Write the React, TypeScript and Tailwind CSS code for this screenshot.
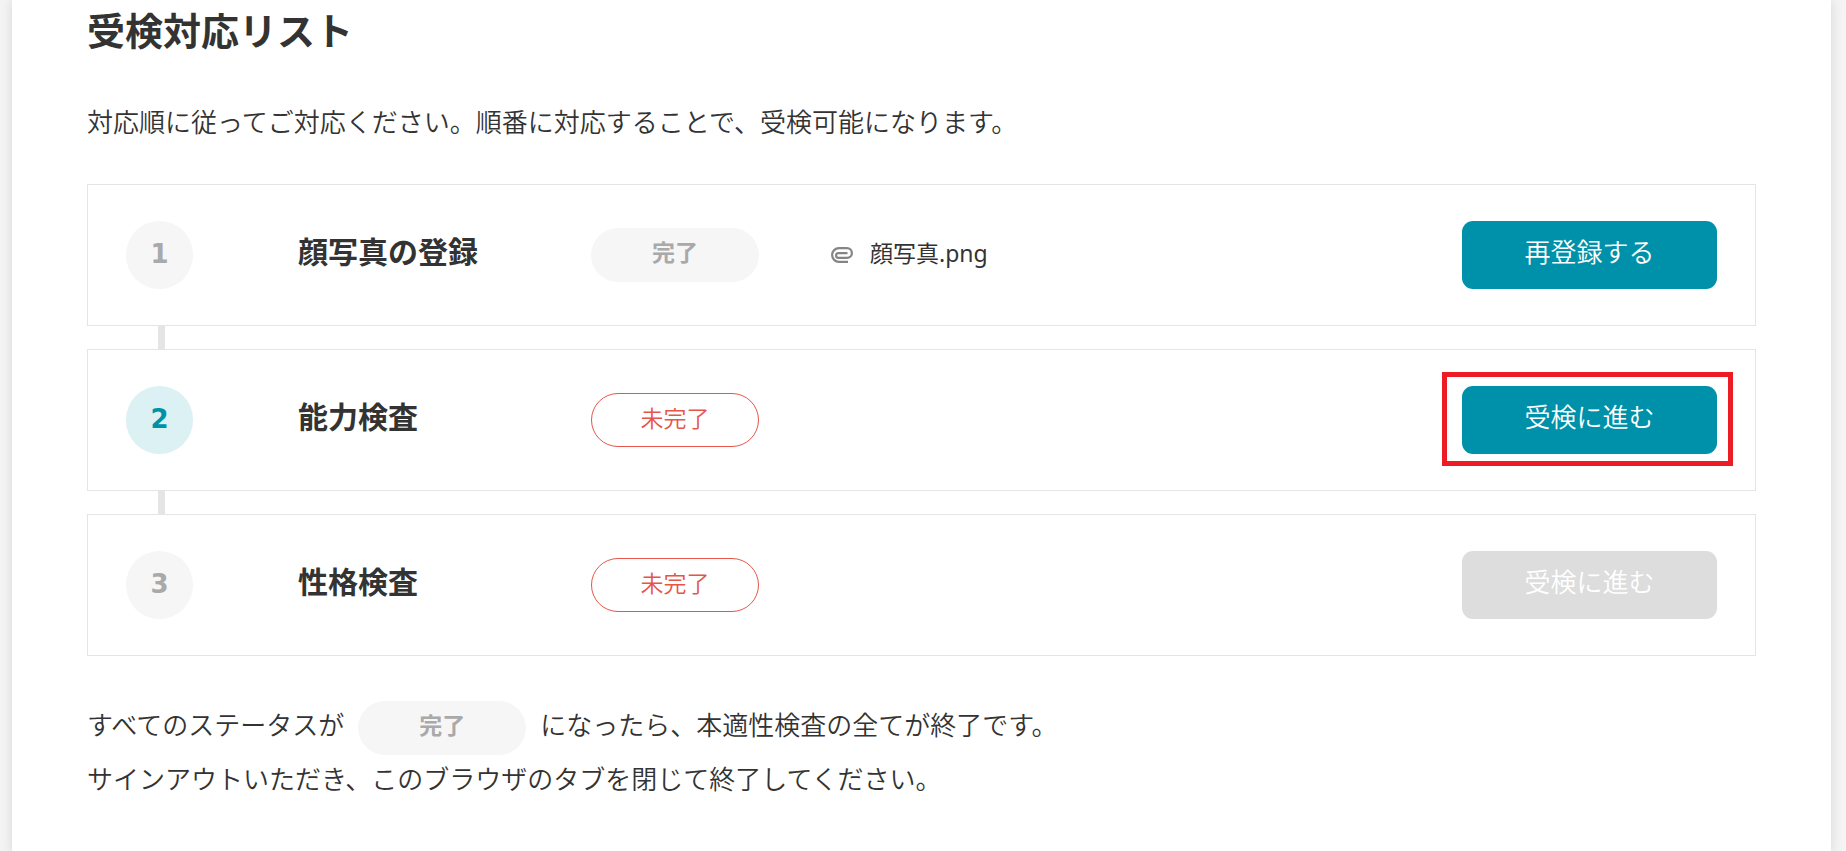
type Step = {
  title: string;
  done: boolean;
  action: string;
  current?: boolean;
  disabled?: boolean;
  highlighted?: boolean;
  file?: string;
};

const steps: Step[] = [
  { title: "顔写真の登録", done: true, action: "再登録する", file: "顔写真.png" },
  { title: "能力検査", done: false, action: "受検に進む", current: true, highlighted: true },
  { title: "性格検査", done: false, action: "受検に進む", disabled: true },
];

function StatusBadge({ done }: { done: boolean }) {
  return done ? (
    <span className="inline-flex h-[54px] w-[168px] shrink-0 items-center justify-center rounded-full bg-[#f6f6f6] pb-1.5 text-[23px] leading-none font-bold text-[#a9a9a9]">
      完了
    </span>
  ) : (
    <span className="inline-flex h-[54px] w-[168px] shrink-0 items-center justify-center rounded-full border border-[#e5554a] pb-1 text-[23px] leading-none font-[350] text-[#e5554a]">
      未完了
    </span>
  );
}

function ClipIcon() {
  return (
    <svg width="22" height="16" viewBox="0 0 22 16" fill="none" stroke="#858585" strokeWidth="2.2" aria-hidden="true">
      <path d="M17 14.9H8A6.9 6.9 0 0 1 8 1.1H16A4.9 4.9 0 0 1 16 10.9H7.5A2.4 2.4 0 0 1 7.5 6.1H16.5" />
    </svg>
  );
}

function StepRow({ step, number }: { step: Step; number: number }) {
  return (
    <li className="group">
      <div className="flex items-center border border-[#e5e5e5] px-[38px] py-9">
        <span
          className={
            "flex h-[68px] w-[67px] shrink-0 items-center justify-center rounded-full pb-0.5 font-['DejaVu_Sans',sans-serif] text-[26px] leading-none font-bold " +
            (step.current ? "bg-[#dbf1f4] text-[#0091aa]" : "bg-[#f6f6f6] text-[#a9a9a9]")
          }
        >
          {number}
        </span>
        <h2 className="ml-[105px] w-[293px] shrink-0 pb-1.5 text-[30px] leading-none font-bold">{step.title}</h2>
        <StatusBadge done={step.done} />
        {step.file && (
          <a href="#photo" className="ml-[72px] flex items-center gap-[17px]">
            <ClipIcon />
            <span className="pb-1 text-[23px] leading-none">{step.file}</span>
          </a>
        )}
        <div className="relative ml-auto">
          <button
            type="button"
            disabled={step.disabled}
            className="flex h-[68px] w-[255px] items-center justify-center rounded-[11px] bg-[#0091aa] pb-1.5 text-[26px] leading-none font-[350] text-white disabled:bg-[#dddddd]"
          >
            {step.action}
          </button>
          {step.highlighted && (
            <div className="pointer-events-none absolute -top-3.5 -right-4 -bottom-3 -left-5 border-5 border-[#ed1c24]" />
          )}
        </div>
      </div>
      <div className="ml-[71px] h-[23px] w-[7px] bg-[#e5e5e5] group-last:hidden" />
    </li>
  );
}

export default function App() {
  return (
    <div className="min-h-screen bg-[#f4f4f4] pr-[15px] pl-3 font-['Noto_Sans','Noto_Sans_CJK_JP',sans-serif] text-[#333333]">
      <main className="min-h-screen bg-white pt-2.5 pr-[75px] pb-12 pl-[75px] shadow-[0_0_12px_rgba(0,0,0,0.12)]">
        <h1 className="text-[38px] leading-10 font-bold">受検対応リスト</h1>
        <p className="mt-[52px] text-[26px] leading-10 font-[350]">
          対応順に従ってご対応ください。順番に対応することで、受検可能になります。
        </p>
        <ol className="mt-[42px]">
          {steps.map((step, i) => (
            <StepRow key={step.title} step={step} number={i + 1} />
          ))}
        </ol>
        <div className="mt-[42px] text-[26px] leading-[54px] font-[350]">
          <p className="flex items-center gap-[14px]">
            <span className="pb-1.5">すべてのステータスが</span>
            <StatusBadge done />
            <span className="pb-1.5">になったら、本適性検査の全てが終了です。</span>
          </p>
          <p className="-mt-1.5">サインアウトいただき、このブラウザのタブを閉じて終了してください。</p>
        </div>
      </main>
    </div>
  );
}
